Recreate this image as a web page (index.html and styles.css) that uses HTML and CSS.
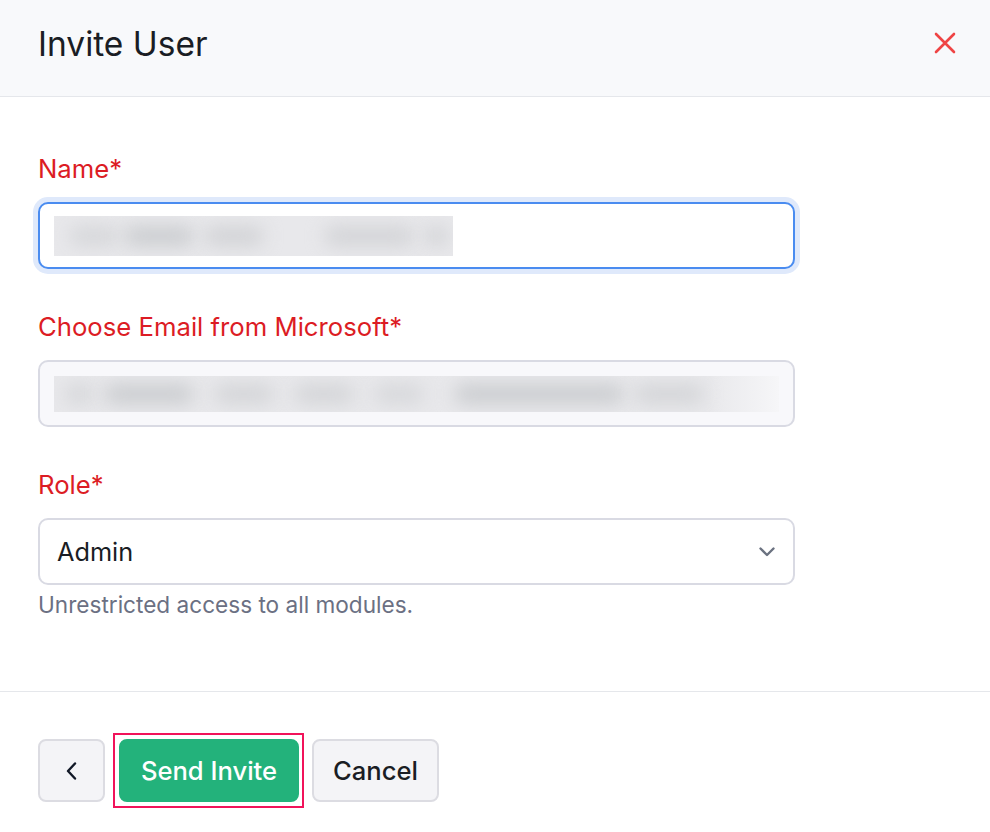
FILE: index.html
```html
<!DOCTYPE html>
<html lang="en">
<head>
<meta charset="utf-8">
<title>Invite User</title>
<link rel="stylesheet" href="styles.css">
</head>
<body>
<div class="modal">
  <header class="modal-header">
    <h1 class="title">Invite User</h1>
    <button class="close" aria-label="Close">
      <svg width="22" height="22" viewBox="0 0 22 22"><path d="M2 2 L20 20 M20 2 L2 20" stroke="#ef4444" stroke-width="2.6" stroke-linecap="round"/></svg>
    </button>
  </header>
  <section class="modal-body">
    <div class="field">
      <label class="label">Name*</label>
      <div class="input input-focus">
        <div class="blur blur-name"><span class="b b1"></span><span class="b b2"></span><span class="b b3"></span><span class="b b4"></span><span class="b b5"></span></div>
      </div>
    </div>
    <div class="field">
      <label class="label">Choose Email from Microsoft*</label>
      <div class="input input-disabled">
        <div class="blur blur-email"><span class="b e1"></span><span class="b e2"></span><span class="b e3"></span><span class="b e4"></span><span class="b e5"></span><span class="b e6"></span><span class="b e7"></span></div>
      </div>
    </div>
    <div class="field field-last">
      <label class="label">Role*</label>
      <div class="input select">
        <span class="select-value">Admin</span>
        <svg class="chevron" width="18" height="12" viewBox="0 0 18 12"><path d="M2.5 2.5 L9 9 L15.5 2.5" fill="none" stroke="#6b7280" stroke-width="2.4" stroke-linecap="round" stroke-linejoin="round"/></svg>
      </div>
      <p class="help">Unrestricted access to all modules.</p>
    </div>
  </section>
  <footer class="modal-footer">
    <button class="btn btn-back" aria-label="Back">
      <svg width="14" height="20" viewBox="0 0 14 20"><path d="M10 2.5 L3 10 L10 17.5" fill="none" stroke="#111827" stroke-width="2.4" stroke-linecap="round" stroke-linejoin="round"/></svg>
    </button>
    <span class="highlight"><button class="btn btn-primary">Send Invite</button></span>
    <button class="btn btn-cancel">Cancel</button>
  </footer>
</div>
</body>
</html>
```

FILE: styles.css
```css
* { box-sizing: border-box; }
html, body { margin: 0; padding: 0; background: #ffffff; }
body { font-family: Inter, "Noto Sans", "Liberation Sans", sans-serif; color: #111827; width: 990px; height: 832px; overflow: hidden; }

.modal { width: 990px; }

.modal-header {
  height: 97px;
  background: #f8f9fb;
  border-bottom: 1px solid #e5e7eb;
  display: flex;
  align-items: center;
  justify-content: space-between;
  padding: 0 34px 0 38px;
}
.title { margin: 0; font-size: 33.5px; line-height: 40px; font-weight: 400; color: #1a1d24; padding-bottom: 8px; }
.close { background: none; border: 0; padding: 0; width: 22px; height: 22px; display: flex; margin-bottom: 11px; }

.modal-body { padding: 55px 38px 72px; border-bottom: 1px solid #e5e7eb; }
.field { display: flex; flex-direction: column; margin-bottom: 41px; width: 757px; }
.field-last { margin-bottom: 0; }
.label { font-size: 25.7px; line-height: 33px; color: #dc1c24; margin-bottom: 17px; }

.input {
  height: 67px;
  border: 2px solid #d9dae3;
  border-radius: 10px;
  background: #fff;
  display: flex;
  align-items: center;
  padding: 0 14px;
}
.input-focus { border-color: #4a8cf0; box-shadow: 0 0 0 5px #dfe9fb; }
.input-disabled { background: #f8f8fb; }

.blur { position: relative; height: 40px; overflow: hidden; background: #e8e8eb; }
.blur-name { width: 399px; }
.blur-email { width: 733px; height: 36px; background: linear-gradient(90deg, #e8e8eb 0, #e8e8eb 90%, #f6f6f8 100%); }
.b { position: absolute; top: 10px; height: 20px; border-radius: 10px; background: #d3d4d7; filter: blur(9px); }
.b1 { left: 15px; width: 50px; background: #d6d7da; }
.b2 { left: 70px; width: 70px; background: #cbcdd0; }
.b3 { left: 150px; width: 60px; background: #d2d3d6; }
.b4 { left: 270px; width: 90px; background: #d3d4d7; }
.b5 { left: 370px; width: 25px; background: #d3d4d7; }
.e1 { left: 10px; width: 30px; top: 8px; background: #d6d7da; }
.e2 { left: 50px; width: 90px; top: 8px; background: #cbcdd0; }
.e3 { left: 160px; width: 60px; top: 8px; background: #d4d5d8; }
.e4 { left: 240px; width: 60px; top: 8px; background: #d4d5d8; }
.e5 { left: 320px; width: 50px; top: 8px; background: #d7d8db; }
.e6 { left: 400px; width: 170px; top: 8px; background: #cbcdd0; }
.e7 { left: 580px; width: 70px; top: 8px; background: #d4d5d8; }

.select { justify-content: space-between; padding: 0 17px; }
.select-value { font-size: 25.3px; color: #1a1d24; }
.chevron { display: block; }

.help { margin: 6px 0 0; font-size: 22.6px; line-height: 28px; color: #6b7083; }

.modal-footer { display: flex; align-items: center; padding: 41px 38px 0; gap: 8px; }
.btn {
  height: 63px;
  border-radius: 8px;
  border: 2px solid #dcdce2;
  background: #f4f4f7;
  font-family: inherit;
  font-size: 25.6px;
  font-weight: 500;
  color: #1a1d24;
  display: flex;
  align-items: center;
  justify-content: center;
  padding: 0;
}
.btn-back { width: 67px; }
.highlight { display: flex; border: 2px solid #f1135a; padding: 4px 3px 4px 4px; }
.btn-primary {
  width: 180px;
  background: #23b27b;
  border-color: #23b27b;
  color: #ffffff;
}
.btn-cancel { width: 127px; }
```
